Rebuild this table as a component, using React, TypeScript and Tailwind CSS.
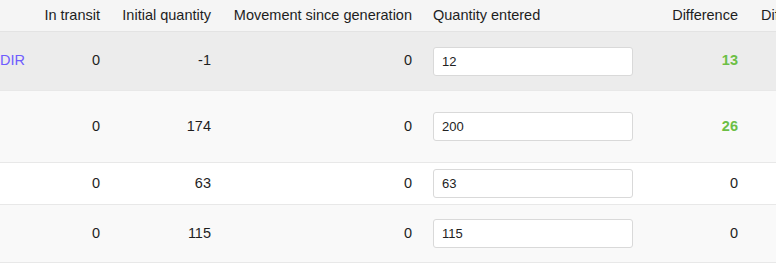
import React from "react";

const cols = "grid grid-cols-[30px_78px_111px_201px_220px_106px_120px] items-center";

type Row = {
  h: string;
  bg: string;
  link?: string;
  transit: string;
  initial: string;
  move: string;
  entered: string;
  diff: string;
  green?: boolean;
};

const rows: Row[] = [
  { h: "h-[59px]", bg: "bg-[#ececec]", link: "DIR", transit: "0", initial: "-1", move: "0", entered: "12", diff: "13", green: true },
  { h: "h-[72px]", bg: "bg-[#f9f9f9]", transit: "0", initial: "174", move: "0", entered: "200", diff: "26", green: true },
  { h: "h-[42px]", bg: "bg-white", transit: "0", initial: "63", move: "0", entered: "63", diff: "0" },
  { h: "h-[58px]", bg: "bg-[#f9f9f9]", transit: "0", initial: "115", move: "0", entered: "115", diff: "0" },
];

export default function App() {
  return (
    <div
      className="w-[776px] h-[263px] overflow-hidden bg-white text-[14.5px] text-[#1e1e1e]"
      style={{ fontFamily: '"Liberation Sans", Arial, sans-serif' }}
    >
      <div className="w-[866px]">
        <div className={`${cols} h-[32px] bg-[#f5f5f5] border-b border-[#e3e3e3]`}>
          <div />
          <div className="text-right pr-2">In transit</div>
          <div className="text-right pr-2 whitespace-nowrap">Initial quantity</div>
          <div className="text-right pr-2 whitespace-nowrap">Movement since generation</div>
          <div className="pl-[13px] whitespace-nowrap">Quantity entered</div>
          <div className="text-right pr-2">Difference</div>
          <div className="pl-[15px] whitespace-nowrap">Difference %</div>
        </div>
        {rows.map((r, i) => (
          <div key={i} className={`${cols} ${r.h} ${r.bg} border-b border-[#e8e8e8]`}>
            <div className="text-right pr-[9px] text-[#6f5cff] whitespace-nowrap overflow-hidden">{r.link ?? ""}</div>
            <div className="text-right pr-2">{r.transit}</div>
            <div className="text-right pr-2">{r.initial}</div>
            <div className="text-right pr-2">{r.move}</div>
            <div className="pl-[13px]">
              <input
                readOnly
                value={r.entered}
                className="block w-[200px] h-[29px] px-2 bg-white border border-[#d9d9d9] rounded-[3px] text-[13px] text-[#222] outline-none"
                style={{ fontFamily: '"Liberation Sans", Arial, sans-serif' }}
              />
            </div>
            <div className={`text-right pr-2 ${r.green ? "text-[#6cbf45] font-bold" : ""}`}>{r.diff}</div>
            <div />
          </div>
        ))}
      </div>
    </div>
  );
}
